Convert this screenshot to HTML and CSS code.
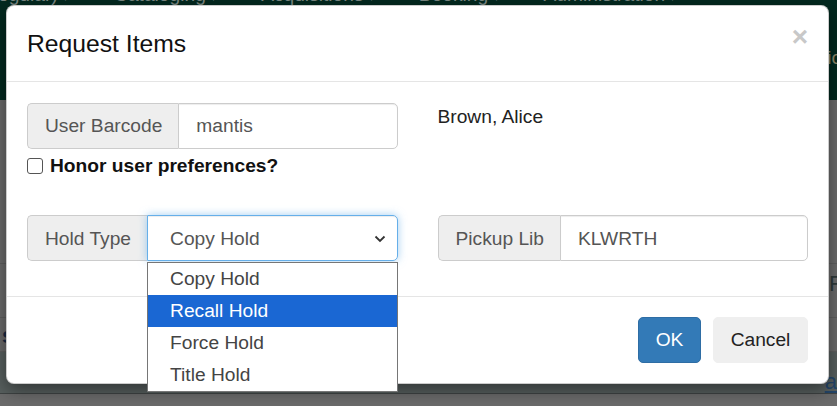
FILE: index.html
```html
<!DOCTYPE html>
<html lang="en">
<head>
<meta charset="utf-8">
<title>Request Items</title>
<link rel="stylesheet" href="styles.css">
</head>
<body>
<div class="page">
  <div class="topnav">
    <div class="navlinks">
      <span class="navitem first">egular) <span class="caret">▾</span></span>
      <span class="navitem">Cataloging <span class="caret">▾</span></span>
      <span class="navitem">Acquisitions <span class="caret">▾</span></span>
      <span class="navitem">Booking <span class="caret">▾</span></span>
      <span class="navitem">Administration <span class="caret">▾</span></span>
    </div>
    <div class="navsub">ic</div>
  </div>
  <div class="content">
    <div class="crow r1"></div>
    <div class="crow r2"><span class="ctext right">R</span></div>
    <div class="crow r3"><span class="ctext left">s</span></div>
    <div class="crow band"><span class="ctext link">a</span></div>
    <div class="crow r4"></div>
  </div>
</div>

<div class="modal">
  <div class="modal-header">
    <h4 class="modal-title">Request Items</h4>
    <span class="close">×</span>
  </div>
  <div class="modal-body">
    <div class="row">
      <div class="col">
        <div class="input-group">
          <span class="addon">User Barcode</span>
          <span class="field">mantis</span>
        </div>
        <label class="check">
          <span class="box"></span>
          <span class="check-text">Honor user preferences?</span>
        </label>
      </div>
      <div class="col">
        <div class="patron">Brown, Alice</div>
      </div>
    </div>
    <div class="row row2">
      <div class="col">
        <div class="input-group">
          <span class="addon">Hold Type</span>
          <div class="select">
            <span>Copy Hold</span>
            <svg class="chev" width="12" height="8" viewBox="0 0 12 8"><path d="M1.5 1.5 L6 6 L10.5 1.5" fill="none" stroke="#333" stroke-width="1.8"/></svg>
            <ul class="options">
              <li>Copy Hold</li>
              <li class="selected">Recall Hold</li>
              <li>Force Hold</li>
              <li>Title Hold</li>
            </ul>
          </div>
        </div>
      </div>
      <div class="col">
        <div class="input-group">
          <span class="addon">Pickup Lib</span>
          <span class="field">KLWRTH</span>
        </div>
      </div>
    </div>
  </div>
  <div class="modal-footer">
    <button class="btn btn-primary">OK</button>
    <button class="btn btn-default">Cancel</button>
  </div>
</div>
</body>
</html>
```

FILE: styles.css
```css
* { box-sizing: border-box; }
html, body {
  margin: 0;
  padding: 0;
}
body {
  width: 837px;
  height: 406px;
  overflow: hidden;
  background: #6b6b6b;
  font-family: "Liberation Sans", Arial, sans-serif;
  font-size: 19.2px;
  line-height: 1.42857;
  color: #333;
  position: relative;
}

/* background page (under the backdrop) */
.page { width: 837px; height: 406px; }
.topnav {
  height: 100px;
  background: #03291f;
  overflow: hidden;
  color: #7c8883;
}
.navlinks {
  display: flex;
  margin-top: -15px;
  line-height: 20px;
  white-space: nowrap;
}
.navitem { margin-right: 45px; }
.navitem.first { margin-left: -2px; margin-right: 46px; }
.caret { font-size: 10px; }
.navsub {
  text-align: right;
  margin-top: 36px;
  margin-right: -4px;
  color: #918a6c;
}
.content { display: flex; flex-direction: column; }
.crow { position: relative; border-bottom: 1px solid #5f5f5f; }
.r1 { height: 164px; }
.r2 { height: 54px; }
.r3 { height: 34px; }
.band { height: 42px; background: #58605f; border-bottom: 1px solid #3f4444; }
.r4 { height: 10px; border: 0; }
.ctext { position: absolute; font-size: 22px; }
.ctext.right { right: -8px; top: 4px; color: #2f3a3a; }
.ctext.left { left: 2px; top: 2px; color: #1a2a44; font-weight: bold; }
.ctext.link { right: 0; top: 14px; color: #24466a; text-decoration: underline; }

/* modal */
.modal {
  position: absolute;
  left: 6px;
  top: 5px;
  width: 823px;
  height: 379px;
  background: #fff;
  border: 1px solid rgba(0,0,0,.2);
  border-radius: 8px;
  box-shadow: 0 6px 18px rgba(0,0,0,.45);
  display: flex;
  flex-direction: column;
}
.modal-header {
  display: flex;
  justify-content: space-between;
  align-items: flex-start;
  padding: 21px 20px 19px 20px;
  border-bottom: 1px solid #e5e5e5;
}
.modal-title {
  margin: 0;
  font-size: 24.7px;
  font-weight: 500;
  line-height: 34.67px;
  color: #111;
}
.close {
  font-size: 28px;
  font-weight: bold;
  line-height: 28px;
  color: #c8c8c8;
  margin-top: -4px;
}
.modal-body {
  padding: 21px 20px 35px;
}
.row {
  display: flex;
  margin: 0 -20px;
}
.row2 { margin-top: 36px; }
.col {
  flex: 1 1 0;
  padding: 0 20px;
  position: relative;
}
.input-group {
  display: flex;
  height: 46px;
  position: relative;
}
.addon {
  display: flex;
  align-items: center;
  padding: 0 16px 0 17px;
  background: #eee;
  border: 1px solid #ccc;
  border-right: 0;
  border-radius: 5px 0 0 5px;
  color: #555;
  white-space: nowrap;
}
.field {
  flex: 1;
  display: flex;
  align-items: center;
  padding: 0 17px;
  border: 1px solid #ccc;
  border-radius: 0 5px 5px 0;
  color: #555;
  box-shadow: inset 0 1px 1px rgba(0,0,0,.075);
}
.check {
  display: flex;
  align-items: center;
  margin-top: 4px;
  height: 26.67px;
  font-weight: bold;
  color: #111;
}
.box {
  width: 16px;
  height: 16px;
  border: 1px solid #555;
  border-radius: 3px;
  background: #fff;
  margin-right: 7px;
}
.patron {
  color: #222;
  line-height: 26.67px;
  margin-top: 1px;
}
.select {
  flex: 1;
  position: relative;
  display: flex;
  align-items: center;
  justify-content: space-between;
  padding: 0 11px 0 22px;
  border: 1px solid #66afe9;
  border-radius: 0 5px 5px 0;
  color: #555;
  box-shadow: inset 0 1px 1px rgba(0,0,0,.075), 0 0 8px rgba(102,175,233,.6);
}
.chev { display: block; margin-top: 1px; }
.options {
  position: absolute;
  left: -1px;
  right: -1px;
  top: 46px;
  margin: 0;
  padding: 0;
  list-style: none;
  background: #fff;
  border: 1px solid #767676;
  z-index: 5;
}
.options li {
  height: 32px;
  line-height: 32px;
  padding-left: 22px;
  color: #444;
}
.options li.selected {
  background: #1a67d3;
  color: #fff;
}
.modal-footer {
  display: flex;
  justify-content: flex-end;
  gap: 12px;
  padding: 20px;
  border-top: 1px solid #e5e5e5;
}
.btn {
  height: 46px;
  padding: 0 16px;
  font-family: inherit;
  font-size: 19.2px;
  border-radius: 5px;
  border: 1px solid transparent;
}
.btn-primary {
  background: #337ab7;
  border-color: #2e6da4;
  color: #fff;
  width: 63px;
}
.btn-default {
  background: #efefef;
  border-color: #efefef;
  color: #222;
  width: 95px;
}
```
